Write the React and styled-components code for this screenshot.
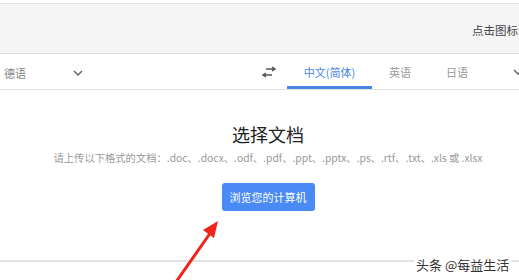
import styled, { createGlobalStyle } from 'styled-components'

const GlobalStyle = createGlobalStyle`
  html, body {
    margin: 0;
    padding: 0;
    background: #ffffff;
    font-family: "Noto Sans CJK SC", "Liberation Sans", sans-serif;
  }
`

const tabs = [
  { label: '中文(简体)', width: 85, active: true },
  { label: '英语', width: 56 },
  { label: '日语', width: 58 },
]

export default function App() {
  return (
    <Page>
      <GlobalStyle />
      <TopBar>
        <Hint>点击图标</Hint>
      </TopBar>

      <LangRow>
        <SourceSide>
          <LangText>德语</LangText>
          <Chevron width="12" height="12" viewBox="0 0 12 12">
            <path d="M2 4l4 4 4-4" fill="none" stroke="#666" strokeWidth="1.5" />
          </Chevron>
        </SourceSide>
        <SwapIcon width="16" height="12" viewBox="0 0 16 12">
          <path d="M5 3h9M11 1l3 2-3 2" fill="none" stroke="#555" strokeWidth="1.5" />
          <path d="M11 9H2M5 7L2 9l3 2" fill="none" stroke="#555" strokeWidth="1.5" />
        </SwapIcon>
        <TargetTabs>
          {tabs.map((t) => (
            <Tab key={t.label} $active={t.active} $width={t.width}>{t.label}</Tab>
          ))}
          <MoreChevron width="10" height="10" viewBox="0 0 10 10">
            <path d="M1 3l4 4 4-4" fill="none" stroke="#666" strokeWidth="1.5" />
          </MoreChevron>
        </TargetTabs>
      </LangRow>

      <Main>
        <Title>选择文档</Title>
        <Subtitle>请上传以下格式的文档：.doc、.docx、.odf、.pdf、.ppt、.pptx、.ps、.rtf、.txt、.xls 或 .xlsx</Subtitle>
        <BrowseButton>浏览您的计算机</BrowseButton>
      </Main>

      <BottomRule />

      <Arrow width="519" height="280" viewBox="0 0 519 280">
        <line x1="176" y1="282" x2="211" y2="232" stroke="#f0241a" strokeWidth="3" />
        <polygon points="218,221 214,238 203,230" fill="#f0241a" />
      </Arrow>

      <Watermark>头条 @每益生活</Watermark>
    </Page>
  )
}

const Page = styled.div`
  position: relative;
  width: 519px;
  height: 280px;
  overflow: hidden;
  background: #fff;
`

const TopBar = styled.div`
  margin-top: 3px;
  height: 51px;
  background: #f5f5f5;
  border-top: 1px solid #e3e3e3;
  border-bottom: 1px solid #dedede;
  display: flex;
  align-items: center;
  justify-content: flex-end;
  padding-top: 3px;
  box-sizing: border-box;
`

const Hint = styled.span`
  font-size: 11.5px;
  color: #444;
  white-space: nowrap;
  margin-right: 1px;
`

const LangRow = styled.div`
  margin-top: 1px;
  height: 35px;
  display: flex;
  align-items: stretch;
  border-bottom: 1px solid #e0e0e0;
  box-sizing: border-box;
  overflow: hidden;
`

const SourceSide = styled.div`
  display: flex;
  align-items: center;
  padding-left: 4px;
  width: 256px;
  flex-shrink: 0;
  box-sizing: border-box;
`

const LangText = styled.span`
  font-size: 11px;
  color: #888;
  width: 68px;
  padding-top: 1px;
`

const Chevron = styled.svg`
  margin-top: 1px;
`

const SwapIcon = styled.svg`
  flex-shrink: 0;
  align-self: center;
  margin-left: 5px;
  margin-right: 10px;
`

const TargetTabs = styled.div`
  display: flex;
  align-items: stretch;
  flex-shrink: 0;
`

const Tab = styled.div`
  display: flex;
  align-items: center;
  justify-content: center;
  box-sizing: border-box;
  width: ${(p) => p.$width}px;
  flex-shrink: 0;
  white-space: nowrap;
  font-size: 11px;
  color: ${(p) => (p.$active ? '#4a86e8' : '#999')};
  border-bottom: 3px solid ${(p) => (p.$active ? '#4a86e8' : 'transparent')};
  padding-top: 3px;
`

const MoreChevron = styled.svg`
  flex-shrink: 0;
  align-self: center;
  margin-left: 27px;
`

const Main = styled.div`
  display: flex;
  flex-direction: column;
  align-items: center;
  padding-top: 30px;
  padding-left: 17px;
`

const Title = styled.h1`
  margin: 0;
  font-size: 18px;
  font-weight: 400;
  color: #222;
  line-height: 28px;
`

const Subtitle = styled.p`
  margin: 2px 0 0;
  font-size: 10.3px;
  color: #999;
  line-height: 16px;
  white-space: nowrap;
`

const BrowseButton = styled.button`
  margin-top: 17px;
  width: 93px;
  height: 28px;
  border: none;
  border-radius: 3px;
  background: #4a8af4;
  color: #fff;
  font-family: inherit;
  font-size: 11px;
  padding: 0;
`

const BottomRule = styled.div`
  margin-top: 49px;
  border-top: 2px solid #e2e2e2;
`

const Arrow = styled.svg`
  position: absolute;
  left: 0;
  top: 0;
  pointer-events: none;
`

const Watermark = styled.div`
  position: absolute;
  left: 414px;
  top: 255px;
  font-size: 13px;
  color: #333;
  background: #fff;
  padding: 0 2px;
  text-shadow: 0 0 2px #fff;
`
